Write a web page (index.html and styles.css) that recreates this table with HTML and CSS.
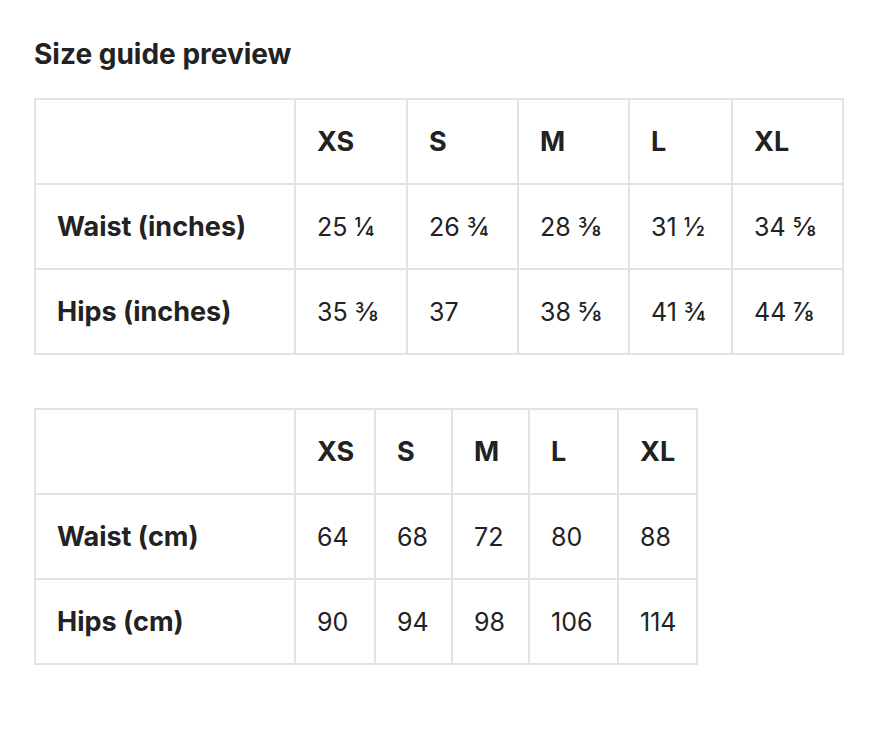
FILE: index.html
```html
<!DOCTYPE html>
<html lang="en">
<head>
<meta charset="utf-8">
<title>Size guide preview</title>
<link rel="stylesheet" href="styles.css">
</head>
<body>
<main class="page">
  <h1 class="title">Size guide preview</h1>

  <table class="size-table size-table--inches">
    <colgroup>
      <col class="col-label">
      <col class="col-w112">
      <col class="col-w111">
      <col class="col-w111">
      <col class="col-w103">
      <col class="col-w111">
    </colgroup>
    <thead>
      <tr>
        <th></th>
        <th>XS</th>
        <th>S</th>
        <th>M</th>
        <th>L</th>
        <th>XL</th>
      </tr>
    </thead>
    <tbody>
      <tr>
        <th>Waist (inches)</th>
        <td>25 ¼</td>
        <td>26 ¾</td>
        <td>28 ⅜</td>
        <td>31 ½</td>
        <td>34 ⅝</td>
      </tr>
      <tr>
        <th>Hips (inches)</th>
        <td>35 ⅜</td>
        <td>37</td>
        <td>38 ⅝</td>
        <td>41 ¾</td>
        <td>44 ⅞</td>
      </tr>
    </tbody>
  </table>

  <table class="size-table size-table--cm">
    <colgroup>
      <col class="col-label">
      <col class="col-w80">
      <col class="col-w77">
      <col class="col-w77">
      <col class="col-w89">
      <col class="col-w79">
    </colgroup>
    <thead>
      <tr>
        <th></th>
        <th>XS</th>
        <th>S</th>
        <th>M</th>
        <th>L</th>
        <th>XL</th>
      </tr>
    </thead>
    <tbody>
      <tr>
        <th>Waist (cm)</th>
        <td>64</td>
        <td>68</td>
        <td>72</td>
        <td>80</td>
        <td>88</td>
      </tr>
      <tr>
        <th>Hips (cm)</th>
        <td>90</td>
        <td>94</td>
        <td>98</td>
        <td>106</td>
        <td>114</td>
      </tr>
    </tbody>
  </table>
</main>
</body>
</html>
```

FILE: styles.css
```css
html, body {
  margin: 0;
  padding: 0;
  background: #ffffff;
}

body {
  font-family: "Inter", "Liberation Sans", sans-serif;
  color: #222222;
}

.page {
  padding: 37px 34px 40px 34px;
}

.title {
  margin: 0 0 27px 0;
  font-size: 28px;
  line-height: 34px;
  font-weight: 700;
  color: #222222;
}

.size-table {
  border-collapse: collapse;
  table-layout: fixed;
  font-size: 25px;
  margin: 0 0 53px 0;
}

.size-table--inches {
  width: 810px;
}

.size-table--cm {
  width: 664px;
}

.size-table th,
.size-table td {
  border: 2px solid #e3e3e3;
  height: 85px;
  padding: 0 21px;
  text-align: left;
  vertical-align: middle;
  box-sizing: border-box;
  white-space: nowrap;
  color: #222222;
}

.size-table th {
  font-size: 27px;
  font-weight: 700;
}

.size-table td {
  font-weight: 400;
}

.col-label { width: 260px; }
.col-w112 { width: 112px; }
.col-w111 { width: 111px; }
.col-w103 { width: 103px; }
.col-w80 { width: 80px; }
.col-w77 { width: 77px; }
.col-w89 { width: 89px; }
.col-w79 { width: 79px; }
```
